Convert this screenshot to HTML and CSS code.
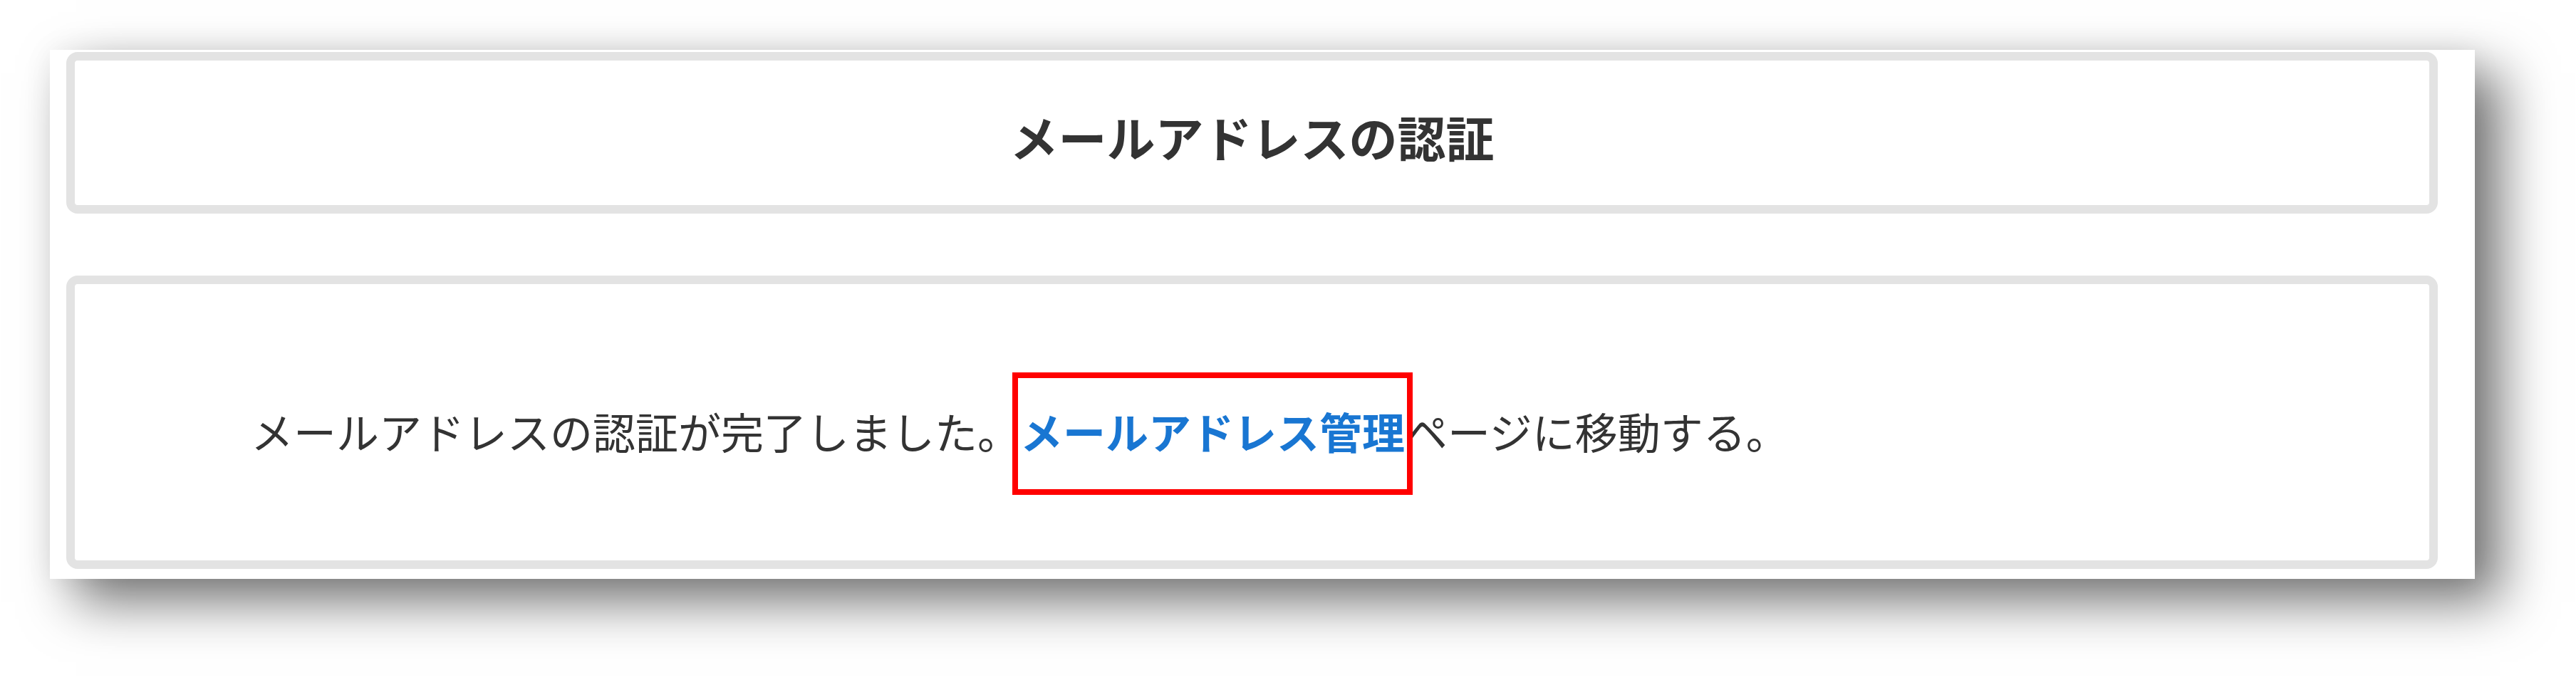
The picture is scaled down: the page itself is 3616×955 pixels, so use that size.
FILE: index.html
```html
<!DOCTYPE html>
<html lang="ja">
<head>
<meta charset="utf-8">
<title>メールアドレスの認証</title>
<link rel="stylesheet" href="styles.css">
</head>
<body>
<div class="frame">
  <section class="card card-title">
    <h1 class="title">メールアドレスの認証</h1>
  </section>
  <section class="card card-body">
    <p class="message">メールアドレスの認証が完了しました。<a class="link" href="#">メールアドレス管理</a>ページに移動する。</p>
  </section>
</div>
</body>
</html>
```

FILE: styles.css
```css
html, body {
  margin: 0;
  padding: 0;
  background: #ffffff;
}

body {
  font-family: "Noto Sans CJK JP", "Noto Sans", sans-serif;
  color: #333333;
  width: 3616px;
  height: 955px;
  overflow: hidden;
}

.frame {
  margin: 70px 0 0 70px;
  width: 3404px;
  height: 743px;
  box-sizing: border-box;
  background: #ffffff;
  padding: 3px 52px 14px 23px;
  display: flex;
  flex-direction: column;
  gap: 87px;
  box-shadow: 36px 32px 70px rgba(0, 0, 0, 0.55), 0 0 40px rgba(0, 0, 0, 0.06);
}

.card {
  box-sizing: border-box;
  border: 12px solid #e3e3e3;
  border-radius: 16px;
  background: #ffffff;
  display: flex;
  align-items: center;
}

.card-title {
  height: 227px;
  justify-content: center;
}

.card-body {
  height: 412px;
}

.title {
  margin: 0;
  padding-top: 10px;
  font-size: 68px;
  font-weight: 700;
  line-height: 1.2;
  color: #333333;
  text-align: center;
}

.message {
  margin: 0;
  padding: 24px 0 0 247px;
  font-size: 60px;
  line-height: 1.3;
  color: #333333;
  white-space: nowrap;
}

.link {
  position: relative;
  color: #1976d2;
  font-weight: 700;
  text-decoration: none;
}

.link::after {
  content: "";
  position: absolute;
  left: -11px;
  right: -11px;
  top: 50%;
  height: 172px;
  margin-top: -82px;
  box-sizing: border-box;
  border: 8px solid #ff0000;
}
```
